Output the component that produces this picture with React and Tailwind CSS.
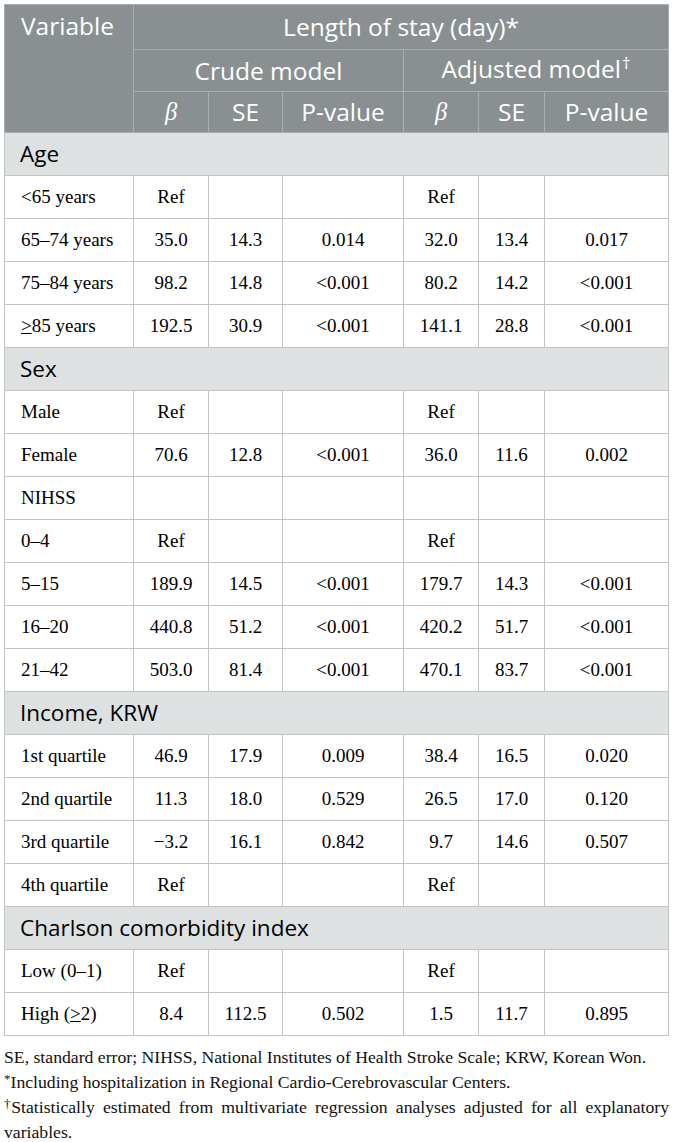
import React from "react";

const sans = { fontFamily: '"Open Sans", "DejaVu Sans", sans-serif' };
const serif = { fontFamily: '"Liberation Serif", "DejaVu Serif", serif' };

const rows = [
  { section: "Age" },
  ["<65 years", "Ref", "", "", "Ref", "", ""],
  ["65–74 years", "35.0", "14.3", "0.014", "32.0", "13.4", "0.017"],
  ["75–84 years", "98.2", "14.8", "<0.001", "80.2", "14.2", "<0.001"],
  ["≥85 years", "192.5", "30.9", "<0.001", "141.1", "28.8", "<0.001"],
  { section: "Sex" },
  ["Male", "Ref", "", "", "Ref", "", ""],
  ["Female", "70.6", "12.8", "<0.001", "36.0", "11.6", "0.002"],
  ["NIHSS", "", "", "", "", "", ""],
  ["0–4", "Ref", "", "", "Ref", "", ""],
  ["5–15", "189.9", "14.5", "<0.001", "179.7", "14.3", "<0.001"],
  ["16–20", "440.8", "51.2", "<0.001", "420.2", "51.7", "<0.001"],
  ["21–42", "503.0", "81.4", "<0.001", "470.1", "83.7", "<0.001"],
  { section: "Income, KRW" },
  ["1st quartile", "46.9", "17.9", "0.009", "38.4", "16.5", "0.020"],
  ["2nd quartile", "11.3", "18.0", "0.529", "26.5", "17.0", "0.120"],
  ["3rd quartile", "−3.2", "16.1", "0.842", "9.7", "14.6", "0.507"],
  ["4th quartile", "Ref", "", "", "Ref", "", ""],
  { section: "Charlson comorbidity index" },
  ["Low (0–1)", "Ref", "", "", "Ref", "", ""],
  ["High (≥2)", "8.4", "112.5", "0.502", "1.5", "11.7", "0.895"],
];

function renderLabel(t) {
  if (t.startsWith("≥")) {
    return (
      <>
        <span className="underline decoration-1 underline-offset-[1px]">&gt;</span>
        {t.slice(1)}
      </>
    );
  }
  if (t.includes("(≥")) {
    const [a, b] = t.split("≥");
    return (
      <>
        {a}
        <span className="underline decoration-1 underline-offset-[1px]">&gt;</span>
        {b}
      </>
    );
  }
  return t;
}

export default function App() {
  const hb = "border border-[#a9aeb0]";
  const bb = "border border-[#c3c3c3]";
  return (
    <div className="bg-white w-[673px] h-[1142px] overflow-hidden pt-[4px] px-[4px]">
      <table className="w-[664px] border-collapse table-fixed text-black">
        <colgroup>
          <col className="w-[129px]" />
          <col className="w-[75px]" />
          <col className="w-[74px]" />
          <col className="w-[121px]" />
          <col className="w-[75px]" />
          <col className="w-[66px]" />
          <col className="w-[124px]" />
        </colgroup>
        <thead className="bg-[#8a8f91] text-white text-[24.5px]" style={sans}>
          <tr className="h-[45px]">
            <th rowSpan={3} className={`${hb} align-top text-left font-normal pl-[16px] pt-[6px] leading-[30px]`}>
              Variable
            </th>
            <th colSpan={6} className={`${hb} font-normal text-center leading-[30px]`}>
              Length of stay (day)*
            </th>
          </tr>
          <tr className="h-[42px]">
            <th colSpan={3} className={`${hb} font-normal text-center leading-[30px]`}>
              Crude model
            </th>
            <th colSpan={3} className={`${hb} font-normal text-center leading-[30px]`}>
              Adjusted model<span className="text-[17px] relative -top-[9px] ml-[1px]">†</span>
            </th>
          </tr>
          <tr className="h-[41px]">
            <th className={`${hb} font-normal italic text-center`} style={serif}>β</th>
            <th className={`${hb} font-normal text-center leading-[30px]`}>SE</th>
            <th className={`${hb} font-normal text-center leading-[30px]`}>P-value</th>
            <th className={`${hb} font-normal italic text-center`} style={serif}>β</th>
            <th className={`${hb} font-normal text-center leading-[30px]`}>SE</th>
            <th className={`${hb} font-normal text-center leading-[30px]`}>P-value</th>
          </tr>
        </thead>
        <tbody>
          {rows.map((r, i) =>
            r.section ? (
              <tr key={i} className="h-[43px] bg-[#dee1e2]">
                <td colSpan={7} className={`${bb} pl-[15px] text-[22.5px] leading-[28px]`} style={sans}>
                  {r.section}
                </td>
              </tr>
            ) : (
              <tr key={i} className="h-[43px]">
                {r.map((c, j) => (
                  <td
                    key={j}
                    className={`${bb} text-[19px] leading-[24px] ${j === 0 ? "text-left pl-[16px] whitespace-nowrap" : "text-center"}`}
                    style={serif}
                  >
                    {j === 0 ? renderLabel(c) : c}
                  </td>
                ))}
              </tr>
            )
          )}
        </tbody>
      </table>
      <div className="mt-[9px] text-[17.7px] leading-[25px] text-[#111]" style={serif}>
        <p>SE, standard error; NIHSS, National Institutes of Health Stroke Scale; KRW, Korean Won.</p>
        <p>
          <span className="text-[13px] leading-none relative -top-[5px]">*</span>Including hospitalization in Regional Cardio-Cerebrovascular Centers.
        </p>
        <p className="text-justify">
          <span className="text-[13px] leading-none relative -top-[5px] -mr-[3px]">†</span>Statistically estimated from multivariate regression analyses adjusted for all explanatory variables.
        </p>
      </div>
    </div>
  );
}
